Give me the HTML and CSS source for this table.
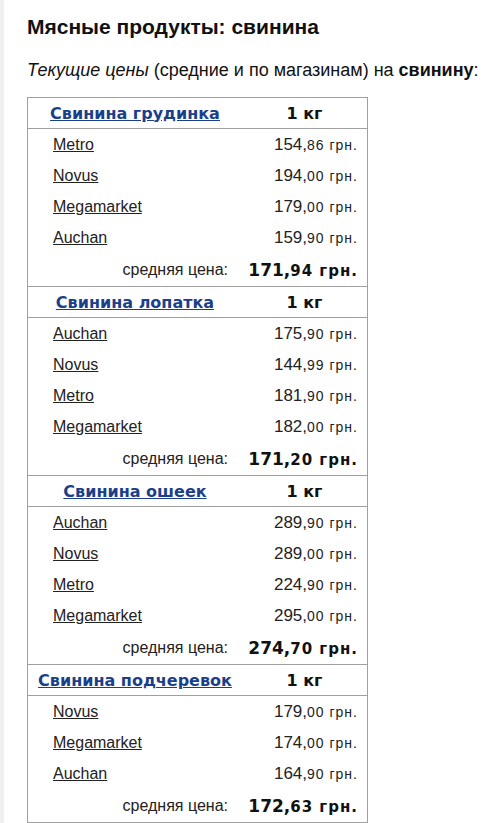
FILE: index.html
```html
<!DOCTYPE html>
<html lang="ru">
<head>
<meta charset="utf-8">
<link rel="stylesheet" href="styles.css">
</head>
<body>
<div class="page">
  <h1 class="title">Мясные продукты: свинина</h1>
  <p class="intro"><em>Текущие цены</em> (средние и по магазинам) на <strong>свинину</strong>:</p>
  <div class="prices">
    <section class="sec">
      <div class="head"><a class="prod" href="#">Свинина грудинка</a><span class="unit">1 кг</span></div>
      <div class="row"><a class="shop" href="#">Metro</a><span class="price">154,<small>86 грн.</small></span></div>
      <div class="row"><a class="shop" href="#">Novus</a><span class="price">194,<small>00 грн.</small></span></div>
      <div class="row"><a class="shop" href="#">Megamarket</a><span class="price">179,<small>00 грн.</small></span></div>
      <div class="row"><a class="shop" href="#">Auchan</a><span class="price">159,<small>90 грн.</small></span></div>
      <div class="avg"><span class="avg-label">средняя цена:</span><span class="avg-price">171,<small>94 грн.</small></span></div>
    </section>
    <section class="sec">
      <div class="head"><a class="prod" href="#">Свинина лопатка</a><span class="unit">1 кг</span></div>
      <div class="row"><a class="shop" href="#">Auchan</a><span class="price">175,<small>90 грн.</small></span></div>
      <div class="row"><a class="shop" href="#">Novus</a><span class="price">144,<small>99 грн.</small></span></div>
      <div class="row"><a class="shop" href="#">Metro</a><span class="price">181,<small>90 грн.</small></span></div>
      <div class="row"><a class="shop" href="#">Megamarket</a><span class="price">182,<small>00 грн.</small></span></div>
      <div class="avg"><span class="avg-label">средняя цена:</span><span class="avg-price">171,<small>20 грн.</small></span></div>
    </section>
    <section class="sec">
      <div class="head"><a class="prod" href="#">Свинина ошеек</a><span class="unit">1 кг</span></div>
      <div class="row"><a class="shop" href="#">Auchan</a><span class="price">289,<small>90 грн.</small></span></div>
      <div class="row"><a class="shop" href="#">Novus</a><span class="price">289,<small>00 грн.</small></span></div>
      <div class="row"><a class="shop" href="#">Metro</a><span class="price">224,<small>90 грн.</small></span></div>
      <div class="row"><a class="shop" href="#">Megamarket</a><span class="price">295,<small>00 грн.</small></span></div>
      <div class="avg"><span class="avg-label">средняя цена:</span><span class="avg-price">274,<small>70 грн.</small></span></div>
    </section>
    <section class="sec">
      <div class="head"><a class="prod" href="#">Свинина подчеревок</a><span class="unit">1 кг</span></div>
      <div class="row"><a class="shop" href="#">Novus</a><span class="price">179,<small>00 грн.</small></span></div>
      <div class="row"><a class="shop" href="#">Megamarket</a><span class="price">174,<small>00 грн.</small></span></div>
      <div class="row"><a class="shop" href="#">Auchan</a><span class="price">164,<small>90 грн.</small></span></div>
      <div class="avg"><span class="avg-label">средняя цена:</span><span class="avg-price">172,<small>63 грн.</small></span></div>
    </section>
  </div>
</div>
</body>
</html>
```
FILE: styles.css
```css
html, body {
  margin: 0;
  padding: 0;
  background: #ffffff;
}
.page {
  border-left: 4px solid #efefef;
  padding: 14px 0 0 23px;
  min-height: 823px;
  box-sizing: border-box;
  font-family: "Liberation Sans", Arial, sans-serif;
  color: #111;
}
.title {
  margin: 0;
  font-size: 21px;
  line-height: 26px;
  font-weight: bold;
  color: #111;
}
.intro {
  margin: 19px 0 0 0;
  font-size: 18px;
  line-height: 22px;
  color: #111;
}
.intro strong {
  font-weight: bold;
}
.prices {
  margin-top: 16px;
  width: 341px;
  border: 1px solid #a0a0a0;
  border-bottom: none;
  box-sizing: border-box;
}
.sec {
  border-bottom: 1px solid #a0a0a0;
}
.head {
  display: grid;
  grid-template-columns: 214px 1fr;
  align-items: center;
  height: 31px;
  border-bottom: 1px solid #a0a0a0;
  box-sizing: border-box;
  text-align: center;
  font-family: "DejaVu Sans", Verdana, sans-serif;
  font-weight: bold;
  font-size: 16px;
}
.prod {
  color: #1b3f8b;
  text-decoration: underline;
}
.unit {
  color: #111;
}
.row {
  display: flex;
  justify-content: space-between;
  align-items: center;
  height: 31px;
  padding: 0 9px 0 25px;
}
.shop {
  color: #222;
  font-size: 16px;
  text-decoration: underline;
}
.price {
  font-size: 17px;
  color: #222;
}
.price small {
  font-size: 14px;
  letter-spacing: 1px;
}
.avg {
  display: grid;
  grid-template-columns: 200px 1fr;
  align-items: center;
  height: 33px;
  padding-right: 9px;
}
.avg-label {
  text-align: right;
  font-size: 16px;
  color: #222;
}
.avg-price {
  text-align: right;
  font-family: "DejaVu Sans", Verdana, sans-serif;
  font-weight: bold;
  font-size: 17px;
  color: #111;
}
.avg-price small {
  font-size: 15px;
  letter-spacing: 1px;
}
```
